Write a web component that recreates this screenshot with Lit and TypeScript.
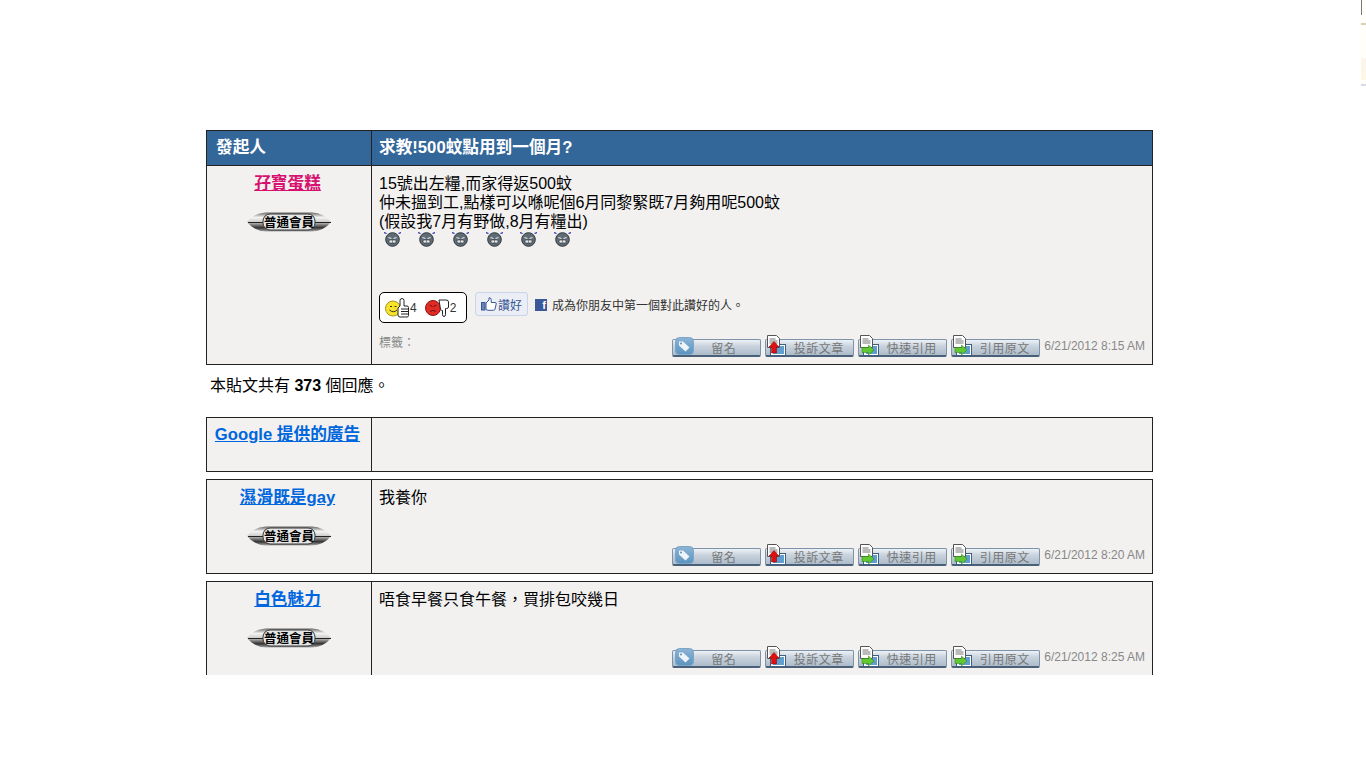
import { LitElement, html, css, svg } from "lit";
import { customElement } from "lit/decorators.js";

const tagIcon = svg`<svg class="ico tag" width="24" height="22" viewBox="0 0 24 22">
  <defs><linearGradient id="tg" x1="0" y1="0" x2="0" y2="1"><stop offset="0" stop-color="#8db4d4"/><stop offset="1" stop-color="#5b94c0"/></linearGradient></defs>
  <rect x="2.500" y="2.500" width="18" height="17" rx="4" fill="url(#tg)" stroke="#7ba6c8"/>
  <path d="M6 6.500h4l6.500 6-4 4-6.500-6z" fill="#eef4f9"/><circle cx="8" cy="8.500" r="1" fill="#5a90bb"/></svg>`;

const docIcon = (arrow: "up" | "right") => svg`<svg class="ico doc" width="24" height="24" viewBox="0 0 24 24">
  <rect x="5.500" y="10.500" width="15" height="11" fill="#fff" stroke="#3d5f80"/>
  <rect x="8" y="12" width="11" height="8" fill="#5f9fd0"/>
  <path d="M2.500 1.500h9l3 3v9h-12z" fill="#fff" stroke="#555"/>
  <path d="M4.500 5h6M4.500 7h8M4.500 9h8" stroke="#777"/>
  ${arrow === "up"
    ? svg`<path d="M9 7.500l5 5.500h-2.500v6h-5v-6h-2.500z" fill="#e01010" stroke="#800" stroke-width=".5"/>`
    : svg`<path d="M10.500 11l5.500 5-5.500 5v-2.500h-6.500v-5h6.500z" fill="#62c832" stroke="#2a7a14" stroke-width=".5"/>`}
</svg>`;

const cry = svg`<svg width="17" height="17" viewBox="0 0 17 17">
  <path d="M0 2.500l2.500 1M17 2.500l-2.500 1" stroke="#2a2ab0" stroke-width="1.300"/>
  <circle cx="8.500" cy="9.500" r="6.800" fill="#5f6c76" stroke="#2f363c"/>
  <path d="M4.500 7.500l3 1M12.500 7.500l-3 1" stroke="#e8e8e8" stroke-width="1.200"/>
  <rect x="5" y="10" width="7" height="3" rx="1" fill="#e4e9ec" stroke="#2a2a2a" stroke-width=".6"/>
  <path d="M8.500 10v3" stroke="#555" stroke-width=".6"/>
</svg>`;

const thumbUp = svg`<svg width="25" height="20" viewBox="0 0 25 20">
  <circle cx="8" cy="10.500" r="7.500" fill="#f7e32a" stroke="#a8941a"/>
  <path d="M5 8.500h2M9.500 8.500h2" stroke="#333"/><path d="M4.500 12q4 3.500 7.500 0" stroke="#333" fill="none"/>
  <path d="M15 8V2.500q0-2 2-2t2 2V8h3q1.500 0 1.500 1.500v8q0 1.500-1.500 1.500h-7q-2 0-2-2V10z" fill="#fff" stroke="#222"/>
  <path d="M16 11h7M16 13.500h7M16 16h7" stroke="#222"/>
</svg>`;

const thumbDown = svg`<svg width="25" height="20" viewBox="0 0 25 20">
  <circle cx="8" cy="10" r="7.500" fill="#e32b26" stroke="#8a1512"/>
  <path d="M4.500 7l3 1.500M11.500 7l-3 1.500M5 13.500q3-2.500 6 0" stroke="#611" fill="none"/>
  <path d="M14 2h7q2.500 0 2.500 2v5q0 1.500-2 1.500h-1v6q0 2-1.500 2t-1.500-2v-4q-1 0-2-1z" fill="#fff" stroke="#222"/>
</svg>`;

const fbThumb = svg`<svg width="16" height="14" viewBox="0 0 16 14">
  <rect x=".5" y="5.500" width="3.500" height="7.500" fill="#6d84b4" stroke="#3b5998"/>
  <path d="M5 6l3-3V.8q2.200-.3 2.200 2V5.500h4q1.300 0 1 1.500l-1.200 5q-.3 1.300-1.500 1.300H7q-1 0-2-1z" fill="#fff" stroke="#3b5998"/>
</svg>`;

const badge = html`<svg class="badge" width="84" height="22" viewBox="0 0 84 22">
  <defs>
    <linearGradient id="bd" x1="0" y1="0" x2="0" y2="1">
      <stop offset="0" stop-color="#666"/><stop offset=".25" stop-color="#f4f4f4"/>
      <stop offset=".5" stop-color="#ccc"/><stop offset=".8" stop-color="#333"/><stop offset="1" stop-color="#aaa"/>
    </linearGradient>
  </defs>
  <path d="M0 11Q7 2 19 1.500H65Q77 2 84 11Q77 20 65 20.500H19Q7 20 0 11z" fill="url(#bd)"/>
  <path d="M1 11.500h83" stroke="#222"/>
  <rect x="16" y="3" width="52" height="16" rx="7" fill="#e6e6e6" stroke="#333"/>
  <text x="42" y="15.500" text-anchor="middle">普通會員</text>
</svg>`;

@customElement("post-actions")
class PostActions extends LitElement {
  static styles = css`
    :host { display: flex; align-items: flex-end; gap: 4px; }
    .btn {
      position: relative; width: 89px; height: 18px; box-sizing: border-box;
      border: 1px solid #7d93aa; border-bottom: 2px solid #4a6078; border-radius: 2px;
      background: linear-gradient(#eef2f6 0, #c9d3dd 40%, #adbccb 100%);
      display: flex; align-items: center; justify-content: center;
      padding: 0 0 1px 14px;
      font: 12px "Noto Sans CJK TC", sans-serif; letter-spacing: 0.5px; color: #777;
    }
    .btn.wide { padding-left: 18px; }
    .ico { position: absolute; }
    .tag { left: 0; bottom: -2px; }
    .doc { left: -1px; bottom: -3px; }
    .date { font: 12px "Liberation Sans", Arial, sans-serif; color: #888; margin: 0 0 4px; line-height: 14px; }
  `;
  static properties = { date: {} };
  date = "";
  render() {
    return html`
      <span class="btn">${tagIcon}留名</span>
      <span class="btn wide">${docIcon("up")}投訴文章</span>
      <span class="btn wide">${docIcon("right")}快速引用</span>
      <span class="btn wide">${docIcon("right")}引用原文</span>
      <span class="date">${this.date}</span>`;
  }
}

@customElement("app-root")
class AppRoot extends LitElement {
  static styles = css`
    :host {
      display: block; height: 768px; background: #fff; overflow: hidden; position: relative;
      font: 16px/19px "Liberation Sans", "Noto Sans CJK TC", Arial, sans-serif; color: #000;
    }
    .page { width: 947px; height: 675px; margin-left: 206px; padding-top: 130px; box-sizing: border-box; overflow: hidden; display: flex; flex-direction: column; }
    .card { border: 1px solid #222; display: grid; grid-template-columns: 165px 1fr; background: #f2f1f0; flex: none; }
    .side { border-right: 1px solid #222; text-align: center; padding-top: 8px; padding-right: 3px; box-sizing: border-box; display: flex; flex-direction: column; align-items: center; }
    .main { padding: 8px 7px 7px 7px; display: flex; flex-direction: column; min-width: 0; }
    .head { background: #336699; color: #fff; font-weight: 700; font-size: 16.670px; line-height: 34px; height: 34px; border-bottom: 1px solid #222; box-sizing: content-box; }
    .head.a { border-right: 1px solid #222; padding-left: 9px; }
    .head.b { padding-left: 7px; }
    a { color: #0066dd; font-weight: 700; font-size: 16.670px; text-decoration: underline; line-height: 19px; }
    a.pink { color: #d6116e; }
    .badge { margin-top: 18px; margin-left: 2px; display: block; }
    .badge text { font: 700 12.500px "Noto Sans CJK TC", sans-serif; fill: #000; }
    .msg { margin: 0; }
    .faces { display: flex; gap: 17px; height: 17px; margin: -1px 0 0 5px; }
    .social { display: flex; align-items: flex-start; margin-top: 45px; }
    .votes { width: 88px; height: 31px; box-sizing: border-box; border: 1px solid #000; border-radius: 5px; background: #fff; display: flex; align-items: center; padding: 0 0 0 5px; font: 12px "Liberation Sans", Arial, sans-serif; color: #333; }
    .votes svg { flex: none; }
    .votes .n { margin-right: 8px; margin-left: 0; }
    .like { margin-left: 8px; width: 53px; height: 24px; box-sizing: border-box; background: #eceef5; border: 1px solid #cad4e7; border-radius: 3px; display: flex; align-items: center; gap: 1px; padding-left: 5px; font: 12px "Noto Sans CJK TC", sans-serif; color: #3b5998; }
    .fb { margin: 7px 0 0 7px; width: 12px; height: 12px; background: #3b5998; color: #fff; font: 700 11px/13px "Liberation Sans", sans-serif; text-align: right; padding-right: 1px; box-sizing: border-box; overflow: hidden; }
    .fbtext { margin: 5px 0 0 5px; font: 12px/16px "Noto Sans CJK TC", sans-serif; color: #333; }
    .foot { margin-top: auto; display: flex; justify-content: space-between; align-items: flex-end; }
    .tags { font: 12px/14px "Noto Sans CJK TC", sans-serif; color: #888; margin-bottom: 8px; }
    .foot post-actions { margin-left: auto; }
    .count { margin: 11px 0 22px 4px; height: 19px; flex: none; }
    .count b { font-family: "Liberation Sans", Arial, sans-serif; }
    .gap { margin-top: 7px; }
    .sb { position: absolute; right: 0; top: 0; width: 5px; height: 86px; background: #fffef9; }
    .sb i { position: absolute; left: 0; display: block; }
    .sb .l { top: 0; width: 1px; height: 15px; background: #777; }
    .sb .t { top: 23px; width: 5px; height: 2px; background: #d8d2bc; }
    .sb .s { top: 58px; width: 5px; height: 22px; background: linear-gradient(#fdf3ef, #fdf8e2); }
    .sb .b { top: 84px; width: 5px; height: 2px; background: #d8dbe4; }
  `;

  render() {
    return html`
      <div class="page">
        <div class="card">
          <div class="head a">發起人</div>
          <div class="head b">求教!500蚊點用到一個月?</div>
          <div class="side" style="height:198px"><a class="pink" href="#">孖寶蛋糕</a>${badge}</div>
          <div class="main">
            <p class="msg">15號出左糧,而家得返500蚊<br>仲未搵到工,點樣可以喺呢個6月同黎緊既7月夠用呢500蚊<br>(假設我7月有野做,8月有糧出)</p>
            <div class="faces">${cry}${cry}${cry}${cry}${cry}${cry}</div>
            <div class="social">
              <div class="votes">${thumbUp}<span class="n">4</span>${thumbDown}<span class="n">2</span></div>
              <div class="like">${fbThumb}讚好</div>
              <div class="fb">f</div>
              <div class="fbtext">成為你朋友中第一個對此讚好的人。</div>
            </div>
            <div class="foot"><span class="tags">標籤：</span><post-actions date="6/21/2012 8:15 AM"></post-actions></div>
          </div>
        </div>
        <div class="count">本貼文共有 <b>373</b> 個回應。</div>
        <div class="card">
          <div class="side" style="height:53px;padding-top:7px"><a href="#">Google 提供的廣告</a></div>
          <div class="main"></div>
        </div>
        <div class="card gap">
          <div class="side" style="height:93px"><a href="#">濕滑既是gay</a>${badge}</div>
          <div class="main"><p class="msg">我養你</p>
            <div class="foot"><post-actions date="6/21/2012 8:20 AM"></post-actions></div></div>
        </div>
        <div class="card gap">
          <div class="side" style="height:93px"><a href="#">白色魅力</a>${badge}</div>
          <div class="main"><p class="msg">唔食早餐只食午餐，買排包咬幾日</p>
            <div class="foot"><post-actions date="6/21/2012 8:25 AM"></post-actions></div></div>
        </div>
      </div>
      <div class="sb"><i class="l"></i><i class="t"></i><i class="s"></i><i class="b"></i></div>
    `;
  }
}
